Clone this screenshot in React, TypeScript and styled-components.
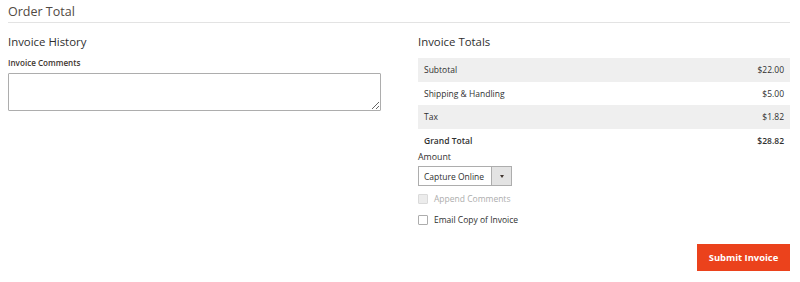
import React from "react";
import styled, { createGlobalStyle } from "styled-components";

const Global = createGlobalStyle`
  html, body { margin: 0; padding: 0; background: #fff; }
  body { font-family: "Open Sans", "Noto Sans", sans-serif; color: #303030; }
  * { box-sizing: border-box; }
`;

const Page = styled.div`
  width: 800px;
  padding: 0 10px 0 8px;
`;

const SectionTitle = styled.div`
  height: 23px;
  padding-top: 4px;
  border-bottom: 1px solid #e3e3e3;
  font-size: 12.5px;
  font-weight: 400;
  line-height: 16px;
  color: #514943;
`;

const Columns = styled.div`
  display: grid;
  grid-template-columns: 373px 372px;
  column-gap: 37px;
  padding-top: 12px;
`;

const Column = styled.div`
  display: flex;
  flex-direction: column;
`;

const ItemTitle = styled.div<{ $mb: number }>`
  font-size: 11.4px;
  font-weight: 400;
  line-height: 14px;
  color: #303030;
  margin-bottom: ${(p) => p.$mb}px;
`;

const FieldLabel = styled.label`
  font-size: 8.1px;
  font-weight: 600;
  line-height: 10px;
  color: #41362f;
  margin-bottom: 5px;
`;

const Textarea = styled.textarea`
  width: 373px;
  height: 38px;
  border: 1px solid #adadad;
  border-radius: 1px;
  font-family: inherit;
  margin: 0;
  display: block;
`;

const Table = styled.div`
  display: flex;
  flex-direction: column;
`;

const Row = styled.div<{ $shade?: boolean; $strong?: boolean }>`
  height: 23.5px;
  display: flex;
  align-items: center;
  justify-content: space-between;
  padding: 0 6px;
  background: ${(p) => (p.$shade ? "#efefef" : "transparent")};
  font-size: 8.5px;
  font-weight: ${(p) => (p.$strong ? 600 : 400)};
  color: #303030;
`;

const AmountLabel = styled.div`
  font-size: 8.8px;
  line-height: 10px;
  color: #303030;
  margin-bottom: 4px;
`;

const Select = styled.div`
  width: 94px;
  height: 20px;
  display: flex;
  border: 1px solid #adadad;
  background: #fff;
`;

const SelectText = styled.div`
  flex: 1;
  display: flex;
  align-items: center;
  padding-left: 5px;
  font-size: 8.5px;
  color: #303030;
`;

const SelectButton = styled.div`
  width: 20px;
  border-left: 1px solid #adadad;
  background: #e3e3e3;
  display: flex;
  align-items: center;
  justify-content: center;
`;

const Arrow = styled.div`
  width: 0;
  height: 0;
  border-left: 2.5px solid transparent;
  border-right: 2.5px solid transparent;
  border-top: 3px solid #41362f;
`;

const CheckRow = styled.div<{ $disabled?: boolean; $mt: number }>`
  display: flex;
  align-items: center;
  gap: 6px;
  margin-top: ${(p) => p.$mt}px;
  font-size: 8.5px;
  line-height: 10px;
  color: ${(p) => (p.$disabled ? "#adadad" : "#303030")};
`;

const Box = styled.span<{ $disabled?: boolean }>`
  width: 10px;
  height: 10px;
  border: 1px solid ${(p) => (p.$disabled ? "#dadada" : "#adadad")};
  background: ${(p) => (p.$disabled ? "#ececec" : "#fff")};
  border-radius: 1px;
  display: inline-block;
`;

const Actions = styled.div`
  display: flex;
  justify-content: flex-end;
  margin-top: 19px;
`;

const PrimaryButton = styled.button`
  width: 93px;
  height: 27px;
  border: none;
  background: #eb421c;
  color: #fff;
  font-family: inherit;
  font-weight: 700;
  font-size: 9.4px;
  padding: 0;
  cursor: pointer;
`;

const rows = [
  { label: "Subtotal", value: "$22.00", shade: true },
  { label: "Shipping & Handling", value: "$5.00" },
  { label: "Tax", value: "$1.82", shade: true },
  { label: "Grand Total", value: "$28.82", strong: true },
];

export default function App() {
  return (
    <>
      <Global />
      <Page>
        <SectionTitle>Order Total</SectionTitle>
        <Columns>
          <Column>
            <ItemTitle $mb={9}>Invoice History</ItemTitle>
            <FieldLabel>Invoice Comments</FieldLabel>
            <Textarea />
          </Column>
          <Column>
            <ItemTitle $mb={9}>Invoice Totals</ItemTitle>
            <Table>
              {rows.map((r) => (
                <Row key={r.label} $shade={r.shade} $strong={r.strong}>
                  <span>{r.label}</span>
                  <span>{r.value}</span>
                </Row>
              ))}
            </Table>
            <AmountLabel>Amount</AmountLabel>
            <Select>
              <SelectText>Capture Online</SelectText>
              <SelectButton>
                <Arrow />
              </SelectButton>
            </Select>
            <CheckRow $disabled $mt={8}>
              <Box $disabled />
              Append Comments
            </CheckRow>
            <CheckRow $mt={11}>
              <Box />
              Email Copy of Invoice
            </CheckRow>
            <Actions>
              <PrimaryButton>Submit Invoice</PrimaryButton>
            </Actions>
          </Column>
        </Columns>
      </Page>
    </>
  );
}
